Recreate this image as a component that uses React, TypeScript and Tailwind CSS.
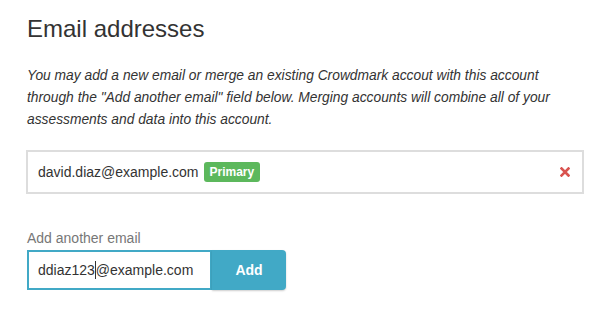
import React from "react";

export default function App() {
  return (
    <div className="min-h-screen bg-white font-['Liberation_Sans',Arial,sans-serif] text-[#333]">
      <div className="w-[558px] pl-[27px] pt-[16px]">
        <h1 className="text-[24px] leading-[26px] font-normal">Email addresses</h1>
        <p className="mt-[23px] w-[525px] text-[13.8px] leading-[22px] italic">
          You may add a new email or merge an existing Crowdmark accout with this account through the "Add
          another email" field below. Merging accounts will combine all of your assessments and data into this
          account.
        </p>
      </div>

      <div className="ml-[26px] mt-[19px] flex h-[44px] w-[558px] items-center border-2 border-[#ddd] pl-[10px] pr-[12px]">
        <span className="text-[14px]">david.diaz@example.com</span>
        <span className="ml-[5px] rounded-[3px] bg-[#5cb85c] px-[6px] py-[3px] text-[12px] leading-[14px] font-bold text-white">
          Primary
        </span>
        <span className="ml-auto flex h-[10px] w-[10px] items-center justify-center">
          <svg viewBox="0 0 10 10" width="10" height="10">
            <path d="M1.5 1.5 L8.5 8.5 M8.5 1.5 L1.5 8.5" stroke="#d9534f" strokeWidth="2.6" strokeLinecap="square" />
          </svg>
        </span>
      </div>

      <div className="ml-[27px] mt-[36px]">
        <label className="block text-[14px] leading-[16px] text-[#777]">Add another email</label>
        <div className="mt-[4px] flex h-[40px]">
          <div className="flex w-[185px] items-center border-2 border-[#41a9c6] bg-white pl-[9px] text-[14px] text-[#333]">
            <span>ddiaz123</span>
            <span className="inline-block h-[18px] w-px bg-[#333]" />
            <span>@example.com</span>
          </div>
          <button
            type="button"
            className="flex w-[74px] items-center justify-center rounded-r-[4px] bg-[#41a9c6] text-[14px] font-bold text-white shadow-[0_1px_2px_rgba(0,0,0,0.2)]"
          >
            Add
          </button>
        </div>
      </div>
    </div>
  );
}
